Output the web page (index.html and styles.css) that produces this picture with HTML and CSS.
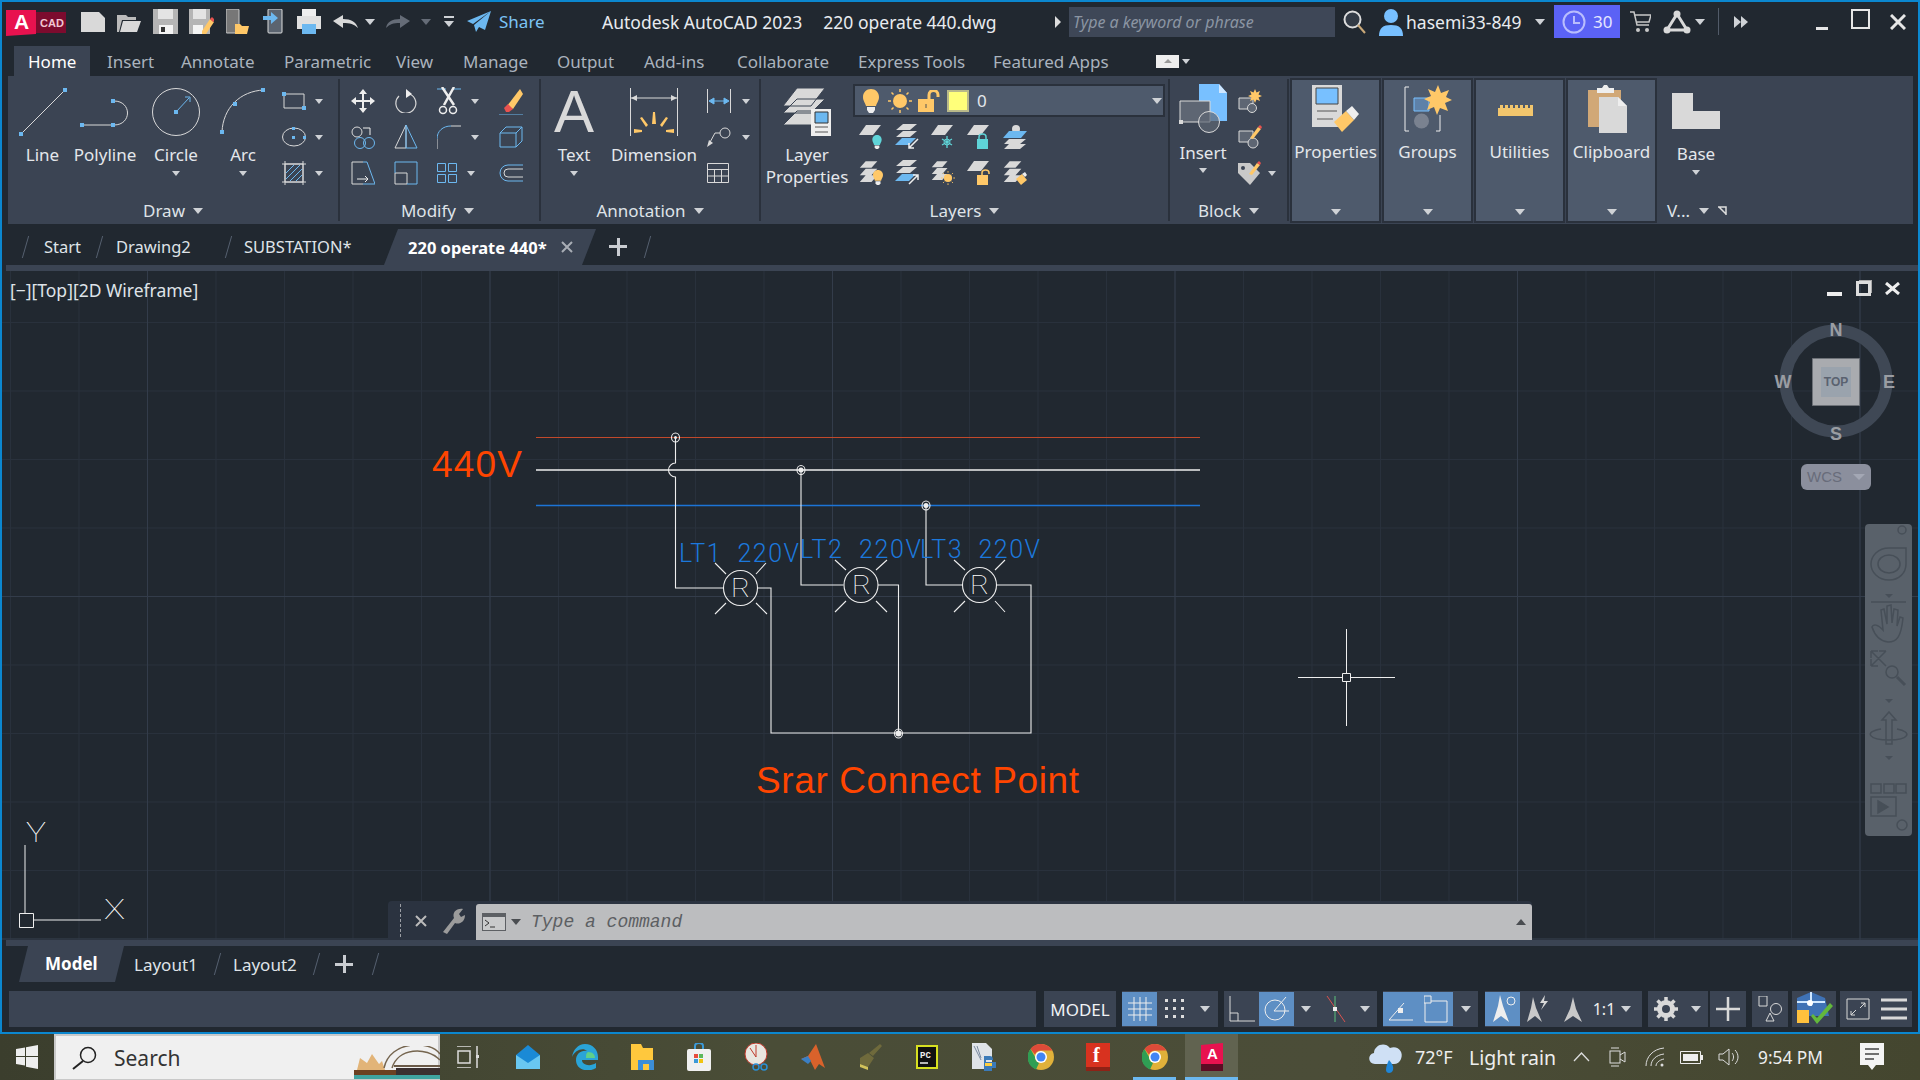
FILE: index.html
```html
<!DOCTYPE html>
<html>
<head>
    <title>Autodesk AutoCAD 2023</title>
    <meta charset="UTF-8">
    <link rel="stylesheet" href="styles.css">
</head>
<body>
<svg class="defs">
    <symbol id="layer" viewBox="0 0 22 11"><path d="M7 0h15l-8 10H0z" fill="#d9d9d9"/></symbol>
    <symbol id="stack" viewBox="0 0 24 26"><path d="M8 0h14l-7 8H1zM8 9h14l-7 8H1zM8 17h14l-7 8H1z" fill="#d9d9d9"/></symbol>
    <symbol id="bulb" viewBox="0 0 16 24"><path d="M8 0c4.500 0 8 3.500 8 8 0 4-2.500 6-3 9H3c-.5-3-3-5-3-9 0-4.500 3.500-8 8-8z" fill="currentColor"/><path d="M4 18h8v3l-2 3H6l-2-3z" fill="#eee"/></symbol>
    <symbol id="lock" viewBox="0 0 16 20"><path d="M1 8h14v12H1z" fill="currentColor"/><path d="M8 12v4" stroke="#3b4453"/></symbol>
    <symbol id="sun" viewBox="0 0 24 24"><circle cx="12" cy="12" r="7" fill="#ffc868"/><path d="M12 0v3M12 21v3M0 12h3M21 12h3M3.500 3.500l2 2M18.500 18.500l2 2M3.500 20.500l2-2M18.500 5.500l2-2" stroke="#ffc868" stroke-width="1.500"/></symbol>
    <symbol id="chrome" viewBox="0 0 26 26"><circle cx="13" cy="13" r="13" fill="#e0b13a"/><path d="M13 0a13 13 0 0 1 11.300 6.500H13a6.500 6.500 0 0 0-6 4L2.500 5A13 13 0 0 1 13 0z" fill="#dd4b39"/><path d="M2.500 5L7 13a6.500 6.500 0 0 0 4 6l-3 6.500A13 13 0 0 1 2.500 5z" fill="#2f9e54"/><circle cx="13" cy="13" r="6" fill="#fff"/><circle cx="13" cy="13" r="4.500" fill="#4285f4"/></symbol>
</svg>

<div class="window">
    <div class="titlebar">
        <svg class="logo" width="60" height="28" viewBox="0 0 60 28"><path d="M0 2h30v24L0 28z" fill="#e8124f"/><path d="M30 4h30v21H30z" fill="#7c0b2e"/><text x="8" y="21" class="logo-a">A</text><text x="34" y="19" class="logo-cad">CAD</text></svg>
        <span class="qat"><svg width="24" height="20" viewBox="0 0 24 20"><path d="M0 0h18l6 6v14H0z" fill="#d9d9d9"/></svg></span>
        <span class="qat"><svg width="24" height="20" viewBox="0 0 24 20"><path d="M0 3h9l2 2h8v3H5L2 20H0z" fill="#bbb"/><path d="M6 9h18l-4 11H3z" fill="#d9d9d9"/></svg></span>
        <span class="qat"><svg width="25" height="25" viewBox="0 0 25 25"><path d="M0 0h25v25H0z" fill="#b5b5b5"/><path d="M5 0h15v10H5z" fill="#e4e4e4"/><path d="M6 16h14v9H6z" fill="#f4f4f4"/><path d="M8 18h4v5H8z" fill="#333"/></svg></span>
        <span class="qat"><svg width="25" height="25" viewBox="0 0 25 25"><path d="M0 0h21v25H0z" fill="#b5b5b5"/><path d="M4 0h13v10H4z" fill="#e4e4e4"/><path d="M4 16h10v9H4z" fill="#f4f4f4"/><path d="M13 22l8-12 4 3-8 12h-4z" fill="#ffc868"/><path d="M21 10l2-2 3 3-2 2z" fill="#e9524f"/></svg></span>
        <span class="qat"><svg width="23" height="25" viewBox="0 0 23 25"><rect x="0" y="0" width="13" height="24" rx="1" fill="#777" stroke="#ccc"/><path d="M9 15h5l2 2h7l-2 8H9z" fill="#ffc868"/></svg></span>
        <span class="qat"><svg width="20" height="25" viewBox="0 0 20 25"><rect x="5" y="0" width="14" height="24" rx="1" fill="#5b6470" stroke="#ddd"/><path d="M0 7h8V3l7 6-7 6v-4H0z" fill="#6cb8f0"/></svg></span>
        <span class="qat"><svg width="24" height="25" viewBox="0 0 24 25"><path d="M5 0h14v8H5z" fill="#eee"/><path d="M0 7h24v13H0z" fill="#e0e0e0"/><path d="M5 15h14v10H5z" fill="#6cb8f0"/></svg></span>
        <span class="qat"><svg width="25" height="13" viewBox="0 0 25 13"><path d="M0 6L10 0v4c8 0 13 3 15 9-4-4-8-5-15-5v5z" fill="#d9d9d9"/></svg></span>
        <span class="qat-caret"><i class="caret"></i></span>
        <span class="qat-redo"><svg width="24" height="13" viewBox="0 0 24 13"><path d="M24 6L14 0v4C6 4 1 7 0 13c4-4 7-5 14-5v5z" fill="#656c77"/></svg></span>
        <span class="qat-caret"><i class="caret dim"></i></span>
        <span class="qat-more"><b></b><i class="caret"></i></span>
        <svg class="plane" width="24" height="21" viewBox="0 0 24 21"><path d="M24 0L0 10l6 3zM24 0L7 14l2 7 3-5 6 3z" fill="#6cb8f0"/></svg>
        <span class="share">Share</span>
        <span class="doc-title"><span>Autodesk AutoCAD 2023</span><span>220 operate 440.dwg</span></span>
        <span class="title-arrow"></span>
        <span class="search">Type a keyword or phrase</span>
        <span class="search-icon"><svg width="24" height="24" viewBox="0 0 24 24"><circle cx="9.500" cy="9.500" r="8" fill="#333b46" stroke="#ddd" stroke-width="2"/><path d="M15 15l7 8" stroke="#c9a878" stroke-width="2"/></svg></span>
        <svg class="user" width="24" height="28" viewBox="0 0 24 28"><circle cx="12" cy="8" r="7" fill="#78c0ff"/><path d="M0 28c0-8 4-11 12-11s12 3 12 11z" fill="#78c0ff"/></svg>
        <span class="user-name">hasemi33-849</span>
        <span class="user-caret"><i class="caret"></i></span>
        <span class="trial"><svg width="24" height="24" viewBox="0 0 24 24"><circle cx="12" cy="12" r="10.500" fill="none" stroke="#b9bdfd" stroke-width="2"/><path d="M12 6v7h6" fill="none" stroke="#b9bdfd" stroke-width="2"/></svg>30</span>
        <span class="cart"><svg width="21" height="22" viewBox="0 0 21 22"><path d="M0 1h4l3 13h12M5 4h16l-2 7H7" fill="none" stroke="#c8c8c8" stroke-width="1.500"/><circle cx="8" cy="19" r="2" fill="#c8c8c8"/><circle cx="17" cy="19" r="2" fill="#c8c8c8"/></svg></span>
        <span class="a360"><svg width="28" height="24" viewBox="0 0 28 24"><path d="M14 4L4 20h20z" fill="none" stroke="#d9d9d9" stroke-width="3" stroke-linejoin="round"/><circle cx="14" cy="4" r="3.500" fill="#d9d9d9"/><circle cx="4" cy="20" r="3.500" fill="#d9d9d9"/><circle cx="24" cy="20" r="3.500" fill="#d9d9d9"/></svg></span>
        <span class="a360-caret"><i class="caret"></i></span>
        <span class="divider"></span>
        <span class="more"><i></i><i></i></span>
        <span class="win-btn"><b class="win-min"></b></span>
        <span class="win-btn"><b class="win-max"></b></span>
        <span class="win-btn"><svg width="16" height="16" viewBox="0 0 16 16"><path d="M1 1l14 14M15 1L1 15" stroke="#e6e6e6" stroke-width="3"/></svg></span>
    </div>

    <div class="ribbon-tabs">
        <span class="rtab active">Home</span><span class="rtab">Insert</span><span class="rtab">Annotate</span><span class="rtab">Parametric</span><span class="rtab">View</span><span class="rtab">Manage</span><span class="rtab">Output</span><span class="rtab">Add-ins</span><span class="rtab">Collaborate</span><span class="rtab">Express Tools</span><span class="rtab">Featured Apps</span>
        <span class="ribbon-toggle"><b></b><i class="caret"></i></span>
    </div>

    <div class="ribbon">
        <!-- Draw -->
        <section class="panel panel-draw">
            <div class="panel-body">
                <div class="tool tool-line"><svg width="48" height="48" viewBox="0 0 48 48"><path d="M2 46L46 2" stroke="#d9d9d9"/><path d="M0 44h4v4H0zM44 0h4v4h-4z" fill="#6cb8f0"/></svg><span>Line</span></div>
                <div class="tool tool-poly"><svg width="50" height="48" viewBox="0 0 50 48"><path d="M2 37h32c18 0 18-24 0-24" fill="none" stroke="#d9d9d9"/><path d="M0 35h4v4H0zM31 35h4v4h-4zM31 11h4v4h-4z" fill="#6cb8f0"/></svg><span>Polyline</span></div>
                <div class="tool tool-circle"><svg width="48" height="48" viewBox="0 0 48 48"><circle cx="24" cy="24" r="23.500" fill="none" stroke="#d9d9d9"/><path d="M24 24L37 10M33 9h5v5" fill="none" stroke="#6cb8f0"/><path d="M22 22h4v4h-4z" fill="#6cb8f0"/></svg><span>Circle</span><i class="caret"></i></div>
                <div class="tool tool-arc"><svg width="46" height="48" viewBox="0 0 46 48"><path d="M2 44C3 20 20 3 44 2" fill="none" stroke="#d9d9d9"/><path d="M0 42h4v4H0zM13 14h4v4h-4zM41 0h4v4h-4z" fill="#6cb8f0"/></svg><span>Arc</span><i class="caret"></i></div>
                <div class="small-col draw-col">
                    <div class="small"><svg width="24" height="18" viewBox="0 0 24 18"><path d="M2 2h20v14H2z" fill="none" stroke="#d9d9d9"/><path d="M0 0h4v4H0zM20 14h4v4h-4z" fill="#6cb8f0"/></svg><i class="caret"></i></div>
                    <div class="small"><svg width="24" height="20" viewBox="0 0 24 20"><ellipse cx="12" cy="10" rx="11.500" ry="9" fill="none" stroke="#d9d9d9"/><path d="M10 0h3v3h-3zM10 9h3v3h-3zM21 9h3v3h-3z" fill="#6cb8f0"/></svg><i class="caret"></i></div>
                    <div class="small"><svg width="24" height="24" viewBox="0 0 24 24"><path d="M3 3h18v18H3zM0 3h24M0 21h24M3 0v24M21 0v24" fill="none" stroke="#d9d9d9"/><path d="M4 12l8-8M4 18L18 4M8 20L20 8M14 20l6-6" stroke="#6cb8f0"/></svg><i class="caret"></i></div>
                </div>
            </div>
            <div class="panel-title">Draw<i class="caret"></i></div>
        </section>

        <!-- Modify -->
        <section class="panel panel-modify">
            <div class="panel-body">
                <div class="modify-grid">
                    <span class="cell"><svg width="24" height="24" viewBox="0 0 24 24"><path d="M12 0l4 5h-3v6h6V8l5 4-5 4v-3h-6v6h3l-4 5-4-5h3v-6H5v3l-5-4 5-4v3h6V5H8z" fill="#eee"/></svg></span>
                    <span class="cell"><svg width="22" height="24" viewBox="0 0 22 24"><path d="M13 4.500A10 10 0 1 1 4 7" fill="none" stroke="#d9d9d9" stroke-width="1.200"/><path d="M11 0l6 5-6 4z" fill="#eee"/></svg></span>
                    <span class="cell wide"><svg width="24" height="28" viewBox="0 0 24 28"><path d="M0 2h9M15 2h9" stroke="#6cb8f0"/><path d="M5 0l12 18M17 0L7 18" stroke="#eee" stroke-width="2.500"/><circle cx="6" cy="23" r="3.500" fill="none" stroke="#eee" stroke-width="1.500"/><circle cx="16" cy="23" r="3.500" fill="none" stroke="#eee" stroke-width="1.500"/></svg><i class="caret"></i></span>
                    <span class="cell"><svg width="24" height="28" viewBox="0 0 24 28"><path d="M0 28h24" stroke="#6cb8f0"/><path d="M8 19L21 2l3 5-10 15z" fill="#ffc868"/><path d="M5 21l4-4 5 5-4 3H7z" fill="#e9524f"/></svg></span>
                    <span class="cell"><svg width="24" height="24" viewBox="0 0 24 24"><circle cx="6" cy="7" r="5" fill="none" stroke="#d9d9d9"/><circle cx="9" cy="18" r="5.500" fill="none" stroke="#6cb8f0"/><circle cx="18" cy="18" r="5.500" fill="none" stroke="#6cb8f0"/><path d="M12 3h7v7" fill="none" stroke="#eee"/></svg></span>
                    <span class="cell"><svg width="24" height="24" viewBox="0 0 24 24"><path d="M12 0L1 23h11z" fill="none" stroke="#d9d9d9"/><path d="M12 0l11 23H12z" fill="none" stroke="#6cb8f0"/></svg></span>
                    <span class="cell wide"><svg width="24" height="24" viewBox="0 0 24 24"><path d="M0 24V14" fill="none" stroke="#d9d9d9"/><path d="M14 1h10" stroke="#d9d9d9"/><path d="M0 14C0 6 6 1 14 1" fill="none" stroke="#6cb8f0"/></svg><i class="caret"></i></span>
                    <span class="cell"><svg width="24" height="22" viewBox="0 0 24 22"><path d="M1 7h16v14H1zM1 7l6-6h16l-6 6M17 21l6-6V1" fill="none" stroke="#6cb8f0"/></svg></span>
                    <span class="cell"><svg width="24" height="24" viewBox="0 0 24 24"><path d="M12 1H1v22h11" fill="none" stroke="#d9d9d9"/><path d="M12 1h4l8 22H12" fill="none" stroke="#6cb8f0"/><path d="M6 18h11M14 15l3 3-3 3" fill="none" stroke="#eee"/></svg></span>
                    <span class="cell"><svg width="24" height="24" viewBox="0 0 24 24"><path d="M1 12h12v11H1z" fill="none" stroke="#d9d9d9"/><path d="M1 12V1h22v22H13" fill="none" stroke="#6cb8f0"/></svg></span>
                    <span class="cell wide"><svg width="20" height="20" viewBox="0 0 20 20"><path d="M.5.5h8v8h-8zM11.500.5h8v8h-8zM.5 11.500h8v8h-8zM11.500 11.500h8v8h-8z" fill="none" stroke="#6cb8f0"/></svg><i class="caret"></i></span>
                    <span class="cell"><svg width="24" height="18" viewBox="0 0 24 18"><path d="M24 1H9a8 8 0 0 0 0 16h15" fill="none" stroke="#6cb8f0"/><path d="M24 5H9a4 4 0 0 0 0 8h15" fill="none" stroke="#d9d9d9"/></svg></span>
                </div>
            </div>
            <div class="panel-title title-modify">Modify<i class="caret"></i></div>
        </section>

        <!-- Annotation -->
        <section class="panel panel-annot">
            <div class="panel-body">
                <div class="tool tool-text"><span class="big-a">A</span><span>Text</span><i class="caret"></i></div>
                <div class="tool tool-dim"><svg width="48" height="48" viewBox="0 0 48 48"><path d="M.5 0v48M47.500 0v48M1 10h46" fill="none" stroke="#d9d9d9"/><path d="M1 10l6-3v6zM47 10l-6-3v6z" fill="#d9d9d9"/><path d="M23 24h2l1 12h-4zM10 30l2-1 6 8-2 2zM38 30l-2-1-6 8 2 2zM4 41l8 1v2l-8 1zM44 41l-8 1v2l8 1z" fill="#ffc868"/></svg><span>Dimension</span></div>
                <div class="small-col annot-col">
                    <div class="small"><svg width="24" height="24" viewBox="0 0 24 24"><path d="M.5 0v24M23.500 0v24" stroke="#d9d9d9" fill="none"/><path d="M2 12l5-3v6zM22 12l-5-3v6zM7 12h10" fill="#6cb8f0" stroke="#6cb8f0"/></svg><i class="caret"></i></div>
                    <div class="small"><svg width="24" height="20" viewBox="0 0 24 20"><circle cx="18" cy="6" r="5" fill="none" stroke="#d9d9d9"/><path d="M13 6H8L2 17" fill="none" stroke="#d9d9d9"/><path d="M0 20l2-7 4 3z" fill="#d9d9d9"/></svg><i class="caret"></i></div>
                    <div class="small"><svg width="22" height="20" viewBox="0 0 22 20"><path d="M.5.5h21v19H.5zM.5 6.500h21M.5 13h21M7.500 6.500V19.500M14.500 6.500V19.500" fill="none" stroke="#d9d9d9"/></svg><i class="caret hide"></i></div>
                </div>
            </div>
            <div class="panel-title">Annotation<i class="caret"></i></div>
        </section>

        <!-- Layers -->
        <section class="panel panel-layers">
            <div class="panel-body">
                <div class="tool tool-layerprops"><svg width="48" height="48" viewBox="0 0 48 48"><path d="M14 0h28L28 18H0zM14 11h28L28 25H0zM14 23h28L28 37H0z" fill="#d9d9d9" stroke="#3b4453"/><path d="M28 21h20v27H28z" fill="#eee"/><path d="M32 24h13v11H32z" fill="#6cb8f0" stroke="#333"/><path d="M32 39h13M32 44h13" stroke="#555"/></svg><span>Layer<br>Properties</span></div>
                <div class="layers-right">
                    <div class="layer-combo">
                        <svg class="combo-bulb" width="16" height="24"><use href="#bulb"/></svg>
                        <svg class="combo-sun" width="24" height="24"><use href="#sun"/></svg>
                        <svg class="combo-lock" width="22" height="22" viewBox="0 0 22 22"><path d="M0 9h16v13H0z" fill="#ffc868"/><path d="M8 14v4" stroke="#555"/><path d="M11 9V5c0-6 9-6 9 0v2" fill="none" stroke="#ffc868" stroke-width="3"/></svg>
                        <span class="combo-swatch"></span>
                        <span class="combo-name">0</span>
                        <i class="caret combo-caret"></i>
                    </div>
                    <div class="layer-row">
                        <span><svg width="24" height="24" viewBox="0 0 24 24"><use href="#layer" width="22" height="11"/><use href="#bulb" x="13" y="10" width="10" height="14" color="#5fd4d8"/></svg></span>
                        <span><svg width="24" height="26" viewBox="0 0 24 26"><path d="M8 0h14l-7 6H1zM8 7h14l-7 6H1z" fill="#d9d9d9"/><path d="M7 14h14l-7 7H0z" fill="#6cb8f0"/><path d="M23 15l-9 9M14 19v5h5" fill="none" stroke="#eee" stroke-width="1.500"/></svg></span>
                        <span><svg width="24" height="24" viewBox="0 0 24 24"><use href="#layer" width="22" height="11"/><path d="M16 11v12M11 14l10 6M21 14l-10 6" stroke="#5fd4d8" stroke-width="1.300"/><circle cx="16" cy="17" r="3" fill="none" stroke="#5fd4d8"/></svg></span>
                        <span><svg width="24" height="24" viewBox="0 0 24 24"><use href="#layer" width="22" height="11"/><path d="M10 14h11v10H10z" fill="#5fd4d8"/><path d="M12 14v-2c0-4 7-4 7 0v2" fill="none" stroke="#5fd4d8" stroke-width="1.500"/></svg></span>
                        <span><svg width="24" height="24" viewBox="0 0 24 24"><circle cx="13" cy="4" r="4" fill="#d9d9d9"/><path d="M6 6h18l-6 7H0z" fill="#6cb8f0"/><path d="M6 14h17l-6 5H1zM6 19h17l-6 5H1z" fill="#d9d9d9"/></svg></span>
                    </div>
                    <div class="layer-row">
                        <span><svg width="24" height="24" viewBox="0 0 24 24"><use href="#stack" width="20" height="22"/><use href="#bulb" x="14" y="9" width="10" height="15" color="#ffc868"/></svg></span>
                        <span><svg width="24" height="26" viewBox="0 0 24 26"><path d="M8 0h14l-7 6H1zM8 7h14l-7 6H1z" fill="#d9d9d9"/><path d="M7 14h14l-7 7H0z" fill="#6cb8f0"/><path d="M14 24l9-9M18 15h5v5" fill="none" stroke="#eee" stroke-width="1.500"/></svg></span>
                        <span><svg width="24" height="24" viewBox="0 0 24 24"><use href="#stack" width="18" height="20"/><use href="#sun" x="10" y="10" width="14" height="14"/></svg></span>
                        <span><svg width="24" height="24" viewBox="0 0 24 24"><use href="#layer" width="22" height="11"/><path d="M10 14h11v10H10z" fill="#ffc868"/><path d="M15 14v-2c0-4 7-4 7 0v1" fill="none" stroke="#ffc868" stroke-width="1.500"/></svg></span>
                        <span><svg width="24" height="24" viewBox="0 0 24 24"><use href="#stack" width="20" height="22"/><path d="M13 18l6-5 5 6-6 5z" fill="#ffc868"/><path d="M19 13l3-2 2 3-2 2z" fill="#eee"/></svg></span>
                    </div>
                </div>
            </div>
            <div class="panel-title">Layers<i class="caret"></i></div>
        </section>

        <!-- Block -->
        <section class="panel panel-block">
            <div class="panel-body">
                <div class="tool tool-insert"><svg width="48" height="49" viewBox="0 0 48 49"><path d="M20 0h20l8 9v28H20z" fill="#78c0ff"/><path d="M40 0l8 9h-8z" fill="#cfe7ff"/><path d="M1 17h30v21H1z" fill="#5e6673" stroke="#d9d9d9"/><circle cx="30" cy="38" r="10.500" fill="#5e6673" fill-opacity=".7" stroke="#d9d9d9"/><path d="M0 36h4v4H0z" fill="#d9d9d9"/></svg><span>Insert</span><i class="caret"></i></div>
                <div class="small-col block-col">
                    <div class="small"><svg width="24" height="24" viewBox="0 0 24 24"><path d="M1 9h14v11H1z" fill="#5e6673" stroke="#d9d9d9"/><circle cx="14" cy="19" r="4.500" fill="#5e6673" stroke="#d9d9d9"/><path d="M17 0l1.500 3.500L22 2l-1.500 3.500L24 7l-3.500 1.500L22 12l-3.500-1.500L17 14l-1.500-3.500L12 12l1.500-3.500L10 7l3.500-1.500L12 2l3.500 1.500z" fill="#ffc868"/></svg><i class="caret hide"></i></div>
                    <div class="small"><svg width="24" height="24" viewBox="0 0 24 24"><path d="M1 6h14v11H1z" fill="#5e6673" stroke="#d9d9d9"/><circle cx="15" cy="18" r="5" fill="#5e6673" stroke="#d9d9d9"/><path d="M12 13L20 2l3 2-8 10z" fill="#ffc868"/><path d="M20 2l2-2 2 2-1 2z" fill="#e9524f"/></svg><i class="caret hide"></i></div>
                    <div class="small"><svg width="24" height="24" viewBox="0 0 24 24"><path d="M0 2h12l10 10-10 12L0 12z" fill="#c9c9c9"/><circle cx="5" cy="7" r="2" fill="#3b4453"/><path d="M11 13L19 2l3 2-8 10z" fill="#ffc868"/><path d="M19 2l2-2 2 2-1 2z" fill="#e9524f"/></svg><i class="caret"></i></div>
                </div>
            </div>
            <div class="panel-title">Block<i class="caret"></i></div>
        </section>

        <!-- collapsed panels -->
        <section class="collapsed-group">
            <div class="collapsed">
                <svg width="48" height="48" viewBox="0 0 48 48"><path d="M0 0h30v42H0z" fill="#d9d9d9"/><path d="M4 3h22v16H4z" fill="#78c0ff" stroke="#444"/><path d="M5 26h20M5 34h16" stroke="#555"/><path d="M22 37l12-11 8 9-12 12z" fill="#ffc868"/><path d="M34 26l6-5 7 8-5 6z" fill="#eee"/></svg>
                <span>Properties</span><i class="caret"></i>
            </div>
            <div class="collapsed">
                <svg width="48" height="48" viewBox="0 0 48 48"><path d="M5 2H1v44h4M32 46h4V30" fill="none" stroke="#eee"/><path d="M10 13h15v13H10z" fill="#5e81a8" stroke="#78c0ff"/><ellipse cx="17.500" cy="36" rx="7.500" ry="7.500" fill="#7a8290"/><path d="M34 0l3 8 8-3-3 7 6 3-7 3 3 8-8-3-3 7-3-8-7 3 3-8-6-3 7-3-3-7 7 3z" fill="#ffc868"/></svg>
                <span>Groups</span><i class="caret"></i>
            </div>
            <div class="collapsed">
                <svg width="48" height="48" viewBox="0 0 48 48"><path d="M2 20v3h2v-3h3v3h2v-3h3v3h2v-3h3v3h2v-3h3v3h2v-3h3v3h2v-3h3v3h2v-3h3v11H2z" fill="#f2c66d"/></svg>
                <span>Utilities</span><i class="caret"></i>
            </div>
            <div class="collapsed">
                <svg width="48" height="48" viewBox="0 0 48 48"><path d="M0 5h33v37H0z" fill="#d1a877"/><path d="M9 3h5l2-3h3l2 3h5v5H9z" fill="#eee"/><path d="M11 12h19l9 9v27H11z" fill="#d9d9d9"/><path d="M30 12l9 9h-9z" fill="#eee"/></svg>
                <span>Clipboard</span><i class="caret"></i>
            </div>
        </section>

        <!-- View -->
        <section class="panel panel-view">
            <div class="panel-body">
                <div class="tool tool-base"><svg width="48" height="36" viewBox="0 0 48 36"><path d="M0 0h21v18h27v18H0z" fill="#d9d9d9"/></svg><span>Base</span><i class="caret"></i></div>
            </div>
            <div class="panel-title view-title">V...<i class="caret"></i><svg width="9" height="9" viewBox="0 0 9 9"><path d="M0 1h8v8M8 8L1 1" fill="none" stroke="#ddd" stroke-width="1.500"/></svg></div>
        </section>
    </div>

    <div class="doc-tabs">
        <i class="slash s1"></i><span class="doc-tab t1">Start</span>
        <i class="slash"></i><span class="doc-tab t2">Drawing2</span>
        <i class="slash"></i><span class="doc-tab t3">SUBSTATION*</span>
        <span class="doc-active">220 operate 440*<svg width="12" height="12" viewBox="0 0 12 12"><path d="M1 1l10 10M11 1L1 11" stroke="#a8adb5" stroke-width="2"/></svg></span>
        <span class="plus"></span>
        <i class="slash s-end"></i>
    </div>
    <div class="strip"></div>

    <div class="viewport">
        <span class="vp-label">[−][Top][2D Wireframe]</span>
        <svg class="drawing" width="1916" height="669" viewBox="2 271 1916 669">
            <path d="M536 437.500H1200" stroke="#c2492b" stroke-width="1"/>
            <path d="M536 470H1200" stroke="#eee" stroke-width="1.300"/>
            <path d="M536 505.500H1200" stroke="#1c74d6" stroke-width="1.300"/>
            <g fill="none" stroke="#eee" stroke-width="1.100">
                <path d="M675.500 437V463A7 7 0 0 0 675.500 477V588H723.500M757 588H771V733H1031V585H997M801 470V585H843.500M878 585H898.500V733M926 505.500V585H962"/>
                <ellipse cx="740.500" cy="588" rx="17" ry="17.500"/>
                <ellipse cx="861" cy="585" rx="17" ry="17.500"/>
                <ellipse cx="979.500" cy="585" rx="17" ry="17.500"/>
                <path d="M715 563L726 574M766 563L756 574M726 603L715 614M756 603L767 614"/>
                <path d="M835 560L846 570M887 560L876 570M846 601L835 612M876 601L887 612"/>
                <path d="M954 560L965 570M1005 560L995 570M965 601L954 612M995 601L1005 612"/>
                <ellipse cx="675.500" cy="437.500" rx="4" ry="4.500"/>
                <ellipse cx="801" cy="470" rx="4" ry="4.500"/>
                <ellipse cx="926" cy="505.500" rx="4" ry="4.500"/>
                <ellipse cx="898.500" cy="733.500" rx="4" ry="4.500"/>
            </g>
            <g fill="#eee">
                <circle cx="675.500" cy="437.500" r="1.500"/>
                <circle cx="801" cy="470" r="2.500"/>
                <circle cx="926" cy="505.500" r="2.500"/>
                <circle cx="898.500" cy="733.500" r="3"/>
            </g>
            <text class="cad-thin" x="731" y="597" textLength="19" lengthAdjust="spacingAndGlyphs">R</text>
            <text class="cad-thin" x="852" y="594" textLength="19" lengthAdjust="spacingAndGlyphs">R</text>
            <text class="cad-thin" x="970" y="594" textLength="19" lengthAdjust="spacingAndGlyphs">R</text>
            <text class="cad-blue" x="679" y="562" textLength="120" xml:space="preserve">LT1  220V</text>
            <text class="cad-blue" x="800" y="558" textLength="121" xml:space="preserve">LT2  220V</text>
            <text class="cad-blue" x="920" y="558" textLength="120" xml:space="preserve">LT3  220V</text>
            <text class="cad-red" x="432" y="477" textLength="90">440V</text>
            <text class="cad-red" x="756" y="793" textLength="323">Srar Connect Point</text>
            <!-- crosshair -->
            <path d="M1298 677.500H1342M1351 677.500H1395M1346.500 629V673M1346.500 682V726" stroke="#eee"/>
            <path d="M1342.500 673.500h8v8h-8z" fill="none" stroke="#eee"/>
            <!-- ucs -->
            <path d="M25 845V913M33 920H101M19.500 913.500h14v14h-14z" fill="none" stroke="#eee"/>
            <text class="cad-ucs" x="26" y="842" textLength="20" lengthAdjust="spacingAndGlyphs">Y</text>
            <text class="cad-ucs" x="104" y="919" textLength="21" lengthAdjust="spacingAndGlyphs">X</text>
        </svg>

        <div class="vp-controls">
            <b class="vp-min"></b>
            <b class="vp-restore"></b>
            <svg width="15" height="13" viewBox="0 0 15 13"><path d="M1 1l13 11M14 1L1 12" stroke="#eee" stroke-width="3"/></svg>
        </div>

        <svg class="viewcube" width="130" height="130" viewBox="0 0 130 130">
            <circle cx="65" cy="65" r="50.500" fill="none" stroke="#3f4855" stroke-width="12"/>
            <path d="M41.500 42.500h47v47h-47z" fill="#a9abaf" stroke="#6e7278"/>
            <path d="M50 51h30v30H50z" fill="#9aa3ad"/>
            <text class="cube-top" x="65" y="70">TOP</text>
            <text class="cube-dir" x="65" y="20">N</text>
            <text class="cube-dir" x="65" y="124">S</text>
            <text class="cube-dir" x="12" y="72">W</text>
            <text class="cube-dir" x="118" y="72">E</text>
        </svg>
        <div class="wcs">WCS<i></i></div>

        <svg class="navbar" width="47" height="312" viewBox="0 0 47 312">
            <rect width="47" height="312" rx="4" fill="#59616a"/>
            <g fill="none" stroke="#474f58" stroke-width="1.500">
                <circle cx="37" cy="6" r="4"/>
                <path d="M24 24c-11 0-18 8-18 16s7 16 18 16c10 0 17-7 17-16V24z"/>
                <ellipse cx="24" cy="40" rx="11" ry="9"/>
                <path d="M6 78h35"/>
                <path d="M18 106c-5-6-10-6-11-3 2 6 6 14 16 15 9 0 13-5 15-24l-3-1-3 9 1-16-4-1-2 14-1-18-4 1v18l-3-15-3 1z"/>
                <path d="M6 127l15 15M21 127L6 142M6 127v7M6 127h7M21 127h-7M6 142v-7M6 142h7"/>
                <circle cx="27" cy="148" r="6"/>
                <path d="M32 153l8 8" stroke-width="3"/>
                <path d="M24 188l7 8h-4v24h-6v-24h-4zM16 205c-18 3-12 11 8 11 20 0 24-8 8-11"/>
                <path d="M6 260h10v9H6zM19 260h10v9H19zM31 260h10v9H31zM6 273h25v19H6z"/>
                <path d="M13 277l10 6-10 6z" fill="#474f58"/>
                <circle cx="37" cy="301" r="5"/>
            </g>
            <path d="M20 70h8l-4 4zM20 175h8l-4 4zM20 232h8l-4 4z" fill="#474f58"/>
        </svg>

        <div class="command">
            <span class="cmd-grip"></span>
            <svg width="12" height="12" viewBox="0 0 12 12"><path d="M1 1l10 10M11 1L1 11" stroke="#bbb" stroke-width="2"/></svg>
            <svg width="24" height="26" viewBox="0 0 24 26"><path d="M2 24L13 10c-2-5 2-10 9-9l-4 5 2 3 4-2c0 7-6 10-10 8L6 26z" fill="#9b9b9b"/></svg>
            <div class="cmd-input">
                <svg width="24" height="18" viewBox="0 0 24 18"><path d="M0 0h24v18H0z" fill="#5d6064"/><path d="M1 4h22v13H1z" fill="#c9cacb"/><path d="M3 7l4 3-4 3M8 14h5" fill="none" stroke="#333"/></svg>
                <i class="cmd-caret"></i>
                <span>Type a command</span>
                <i class="cmd-up"></i>
            </div>
        </div>
    </div>

    <div class="strip"></div>
    <div class="layout-tabs">
        <span class="model-tab">Model</span>
        <span class="layout-tab l1">Layout1</span>
        <i class="slash"></i>
        <span class="layout-tab l2">Layout2</span>
        <i class="slash"></i>
        <span class="plus lplus"></span>
        <i class="slash"></i>
    </div>

    <div class="statusbar">
        <div class="status-fill"></div>
        <div class="sgroup sg-model">MODEL</div>
        <div class="sgroup sg-grid">
            <span class="sbtn on"><svg width="24" height="24" viewBox="0 0 24 24"><path d="M6 0v24M12 0v24M18 0v24M0 6h24M0 12h24M0 18h24" stroke="#eee"/></svg></span>
            <span class="sbtn"><svg width="20" height="20" viewBox="0 0 20 20"><path d="M0 0h3v3H0zM8 0h3v3H8zM16 0h3v3h-3zM0 8h3v3H0zM8 8h3v3H8zM16 8h3v3h-3zM0 16h3v3H0zM8 16h3v3H8zM16 16h3v3h-3z" fill="#ddd"/></svg></span>
            <span class="scaret"><i class="caret"></i></span>
        </div>
        <div class="sgroup sg-ortho">
            <span class="sbtn"><svg width="26" height="26" viewBox="0 0 26 26"><path d="M1 0v25h25M1 17h8v8" fill="none" stroke="#d9d9d9"/></svg></span>
            <span class="sbtn on"><svg width="26" height="26" viewBox="0 0 26 26"><circle cx="11" cy="14" r="10" fill="none" stroke="#eee"/><path d="M10 15L22 1M10 15h15" stroke="#eee"/></svg></span>
            <span class="scaret"><i class="caret"></i></span>
            <span class="sbtn"><svg width="20" height="26" viewBox="0 0 20 26"><path d="M1 0l18 26" stroke="#d9534f"/><path d="M9 0v26" stroke="#5cc17c"/><path d="M7 11h4v4H7z" fill="#eee"/></svg></span>
            <span class="scaret"><i class="caret"></i></span>
        </div>
        <div class="sgroup sg-iso">
            <span class="sbtn on"><svg width="24" height="24" viewBox="0 0 24 24"><path d="M0 23L15 6M0 23h24" stroke="#eee" fill="none"/><path d="M9 11h5v5H9z" fill="#eee"/></svg></span>
            <span class="sbtn on"><svg width="24" height="28" viewBox="0 0 24 28"><path d="M5 6h18v21H1V6" fill="none" stroke="#eee"/><path d="M0 1h7v7H0z" fill="#5e8fc4" stroke="#eee"/></svg></span>
            <span class="scaret"><i class="caret"></i></span>
        </div>
        <div class="sgroup sg-anno">
            <span class="sbtn on"><svg width="26" height="28" viewBox="0 0 26 28"><path d="M10 0l3 11 6 16-8-6-8 6 5-16z" fill="#eee"/><circle cx="21" cy="6" r="4" fill="none" stroke="#eee"/></svg></span>
            <span class="sbtn"><svg width="26" height="28" viewBox="0 0 26 28"><path d="M8 2l3 11 6 14-7-6-8 6 4-14z" fill="#c9c9c9"/><path d="M20 0l-5 8h4l-3 7 7-9h-4z" fill="#d9d9d9"/></svg></span>
            <span class="sbtn"><svg width="22" height="28" viewBox="0 0 22 28"><path d="M11 2l3 12 6 13-9-6-9 6 6-13z" fill="#c9c9c9"/></svg></span>
            <span class="sscale">1:1</span>
            <span class="scaret"><i class="caret"></i></span>
        </div>
        <div class="sgroup sg-gear">
            <span class="sbtn"><svg width="24" height="24" viewBox="0 0 24 24"><circle cx="12" cy="12" r="6.500" fill="none" stroke="#d9d9d9" stroke-width="5"/><path d="M12 0v24M0 12h24M3.500 3.500l17 17M3.500 20.500l17-17" stroke="#d9d9d9" stroke-width="3.500" stroke-dasharray="5 14"/></svg></span>
            <span class="scaret"><i class="caret"></i></span>
        </div>
        <div class="sgroup sg-plus"><svg width="24" height="24" viewBox="0 0 24 24"><path d="M12 0v24M0 12h24" stroke="#d9d9d9" stroke-width="2.500"/></svg></div>
        <div class="sgroup sg-shapes"><svg width="24" height="26" viewBox="0 0 24 26"><path d="M1 0h8v10H1zM8 25l4-8 4 8z" fill="none" stroke="#d9d9d9"/><circle cx="18" cy="13" r="5.500" fill="none" stroke="#d9d9d9"/></svg></div>
        <div class="sgroup sg-clean"><svg width="42" height="34" viewBox="0 0 42 34"><path d="M4 6l14-6 14 6 4 18H4z" fill="#3f72b5"/><path d="M18 0v14M4 10h28" stroke="#cfe7ff" stroke-width="2"/><circle cx="17" cy="11" r="3" fill="#fff"/><path d="M4 18h12v13H4z" fill="#ffc13d"/><path d="M18 24l6 8L40 14l-3-3-13 15-4-4z" fill="#63b83c"/></svg></div>
        <div class="sgroup sg-full">
            <svg width="24" height="22" viewBox="0 0 24 22"><path d="M1 1h22v20H1z" fill="none" stroke="#d9d9d9"/><path d="M5 17l5-5M5 17v-4M5 17h4M19 5l-5 5M19 5v4M19 5h-4" fill="none" stroke="#d9d9d9"/></svg>
            <svg width="26" height="22" viewBox="0 0 26 22"><path d="M0 2h26M0 11h26M0 20h26" stroke="#d9d9d9" stroke-width="3"/></svg>
        </div>
    </div>
</div>

<div class="taskbar">
    <svg class="tb-start" width="22" height="24" viewBox="0 0 22 24"><path d="M0 4l9-1.500V11H0zM10 2.300L22 0v11H10zM0 12h9v8.500L0 19zM10 12h12v12l-12-2.200z" fill="#eee"/></svg>
    <div class="tb-search">
        <svg width="26" height="24" viewBox="0 0 26 24"><circle cx="16" cy="9" r="7.500" fill="none" stroke="#222" stroke-width="1.500"/><path d="M11 15L1 23" stroke="#222" stroke-width="2"/></svg>
        <span>Search</span>
        <svg class="tb-opera" width="86" height="33" viewBox="0 0 86 33">
            <path d="M0 29h86v4H0z" fill="#3fa3a0"/>
            <path d="M0 24h48v5H0z" fill="#6b4122"/>
            <path d="M3 24l3-12 7 5 5-9 7 10 3-3 3 9z" fill="#e2b478"/>
            <path d="M30 22C36-6 76-6 86 8M38 22C44 2 72 0 86 14" fill="none" stroke="#75654f" stroke-width="1.500"/>
            <path d="M40 19h46v2H40z" fill="#6a5a48"/>
            <path d="M42 22h44v7H42z" fill="#3a3030"/>
        </svg>
    </div>
    <span class="tb-app tb-view"><svg width="22" height="22" viewBox="0 0 22 22"><path d="M0 0h14M0 22h14M20 0v22" stroke="#ddd" stroke-width="1.500"/><path d="M1 5h12v12H1z" fill="none" stroke="#ddd" stroke-width="1.500"/><path d="M19 9h3v3h-3z" fill="#ddd"/></svg></span>
    <span class="tb-app"><svg width="24" height="24" viewBox="0 0 24 24"><path d="M12 0L0 10v14h24V10z" fill="#1a8ad6"/><path d="M0 10l12 8 12-8v14H0z" fill="#69c7f1"/></svg></span>
    <span class="tb-app"><svg width="26" height="26" viewBox="0 0 26 26"><path d="M13 0c8 0 13 6 13 13v3H10c0 5 8 7 14 3v5c-8 5-20 2-20-8C4 10 9 6 15 7c-4-4-12-1-15 6C1 6 6 0 13 0z" fill="#2aa4d8"/><path d="M16 8c5 0 7 3 7 6h-9c0-3 0-5 2-6z" fill="#5fd08a"/></svg></span>
    <span class="tb-app"><svg width="24" height="26" viewBox="0 0 24 26"><path d="M1 0h10l2 4h10v22H1z" fill="#ffc83d"/><path d="M8 16h16v10H8z" fill="#3c8ed8"/><path d="M13 20h6v6h-6z" fill="#ffc83d"/></svg></span>
    <span class="tb-app"><svg width="24" height="28" viewBox="0 0 24 28"><path d="M8 6V3c0-4 8-4 8 0v3" fill="none" stroke="#3c9ad8" stroke-width="2"/><rect y="6" width="24" height="22" rx="2" fill="#f0f0f0"/><path d="M7 11h4v4H7z" fill="#e74c3c"/><path d="M12 11h4v4h-4z" fill="#5cb85c"/><path d="M7 16h4v4H7z" fill="#3c9ad8"/><path d="M12 16h4v4h-4z" fill="#f1c40f"/></svg></span>
    <span class="tb-app"><svg width="24" height="28" viewBox="0 0 24 28"><ellipse cx="12" cy="11" rx="11" ry="11" fill="#e9e6e0" stroke="#c0392b"/><path d="M12 2v12M6 5l6 9" stroke="#c0392b"/><circle cx="12" cy="24" r="3" fill="none" stroke="#2c8fd4" stroke-width="1.500"/><circle cx="20" cy="24" r="3" fill="none" stroke="#2c8fd4" stroke-width="1.500"/></svg></span>
    <span class="tb-app"><svg width="24" height="26" viewBox="0 0 24 26"><path d="M0 15l7-3L15 0l3 8 6 16-6-4-4 6-5-10z" fill="#d9622b"/><path d="M0 15l7-3 3 5-3 3z" fill="#3b7fc4"/></svg></span>
    <span class="tb-app"><svg width="24" height="26" viewBox="0 0 24 26"><path d="M22 0l2 2-9 10-4-3zM2 14l8-5 6 5-6 9-8-3z" fill="#6f6a3c"/><path d="M2 20l8 3v3l-8-3z" fill="#d2c25a"/></svg></span>
    <span class="tb-app"><svg width="22" height="24" viewBox="0 0 22 24"><path d="M0 0h22v24H0z" fill="#d7e021"/><path d="M2 2h18v20H2z" fill="#111"/><text x="4" y="13" class="pc-text">PC</text><path d="M4 18h8" stroke="#eee" stroke-width="1.500"/></svg></span>
    <span class="tb-app"><svg width="24" height="28" viewBox="0 0 24 28"><path d="M0 0h14l6 6v20H0z" fill="#dfe3e8"/><path d="M2 3l7 14M5 3l4 12" stroke="#7a8aa0"/><path d="M12 13h6c3 0 3 3 3 4h-7v2h10v6h-4v3h-8z" fill="#3b7ab8"/><path d="M13 20h7v3h-7z" fill="#ffcf40"/></svg></span>
    <span class="tb-app"><svg width="26" height="26"><use href="#chrome"/></svg></span>
    <span class="tb-app"><svg width="24" height="28" viewBox="0 0 24 28"><path d="M0 0h24v24H0z" fill="#d8321f"/><path d="M0 24h24v4H0z" fill="#8e2216"/><text x="7" y="19" class="flash-text">f</text></svg></span>
    <span class="tb-app tb-run"><svg width="26" height="26"><use href="#chrome"/></svg></span>
    <span class="tb-app tb-acad"><svg width="22" height="28" viewBox="0 0 22 28"><path d="M0 2l22-2v21H0z" fill="#e8124f"/><path d="M0 21h22v7H0z" fill="#5d0b24"/><text x="6" y="16" class="acad-text">A</text></svg></span>
    <div class="tb-tray">
        <svg class="tb-cloud" width="38" height="34" viewBox="0 0 38 34"><path d="M8 24C1 24 0 14 7 13c0-8 11-12 16-5 8-3 14 4 11 11-1 3-4 5-7 5z" fill="#cfe0f5"/><path d="M22 20c3 3 5 7 4 10-1 4-7 4-7 0 0-3 1-6 3-10z" fill="#1f86d8"/></svg>
        <span class="tray-temp">72°F</span>
        <span class="tray-weather">Light rain</span>
        <svg class="tray-chev" width="17" height="10" viewBox="0 0 17 10"><path d="M1 9l7.500-8L16 9" fill="none" stroke="#ddd" stroke-width="1.300"/></svg>
        <svg class="tray-meet" width="18" height="22" viewBox="0 0 18 22"><rect x="2" y="5" width="10" height="12" fill="none" stroke="#ddd"/><path d="M12 9l5-3v10l-5-3M3 2h8M3 20h8" fill="none" stroke="#ddd"/></svg>
        <svg class="tray-wifi" width="20" height="20" viewBox="0 0 20 20"><path d="M1 19C1 10 8 2 19 1M6 19c0-6 5-11 13-12M11 19c0-3 3-6 8-7" fill="none" stroke="#ddd"/><circle cx="17" cy="18" r="1.500" fill="#ddd"/></svg>
        <svg class="tray-batt" width="24" height="13" viewBox="0 0 24 13"><path d="M.5.5h20v12H.5z" fill="none" stroke="#eee"/><path d="M3 3h15v7H3z" fill="#eee"/><path d="M21 4h2v5h-2z" fill="#eee"/></svg>
        <svg class="tray-vol" width="22" height="20" viewBox="0 0 22 20"><path d="M1 7h4l6-5v16l-6-5H1z" fill="none" stroke="#ddd"/><path d="M14 6c2 2 2 6 0 8M17 3c4 4 4 10 0 14" fill="none" stroke="#ddd"/></svg>
        <span class="tray-time">9:54 PM</span>
        <svg class="tray-note" width="24" height="28" viewBox="0 0 24 28"><path d="M0 0h24v22h-8l-4 5-4-5H0z" fill="#f4f4f4"/><path d="M5 6h14M5 11h14M5 16h9" stroke="#444" stroke-width="1.500"/></svg>
    </div>
</div>
</body>
</html>
```

FILE: styles.css
```css
* {
    box-sizing: border-box;
}
html, body {
    margin: 0;
    padding: 0;
}
body {
    width: 1920px;
    height: 1080px;
    overflow: hidden;
    background-color: #212830;
    font-family: "Noto Sans", Arial, sans-serif;
    font-size: 17px;
    color: #dfe3e8;
    display: flex;
    flex-direction: column;
}
.defs {
    position: absolute;
    width: 0;
    height: 0;
}
svg {
    display: block;
    flex: none;
}
.caret {
    display: inline-block;
    width: 0;
    height: 0;
    border-left: 5px solid transparent;
    border-right: 5px solid transparent;
    border-top: 6px solid #cfd2d6;
}
.caret.dim {
    border-top-color: #656c77;
}
.caret.hide {
    visibility: hidden;
}

/* window frame */
.window {
    height: 1034px;
    border: 2px solid #0b87cf;
    background-color: #212830;
    display: flex;
    flex-direction: column;
}

/* title bar */
.titlebar {
    height: 44px;
    display: flex;
    align-items: center;
    padding: 0 0 5px 4px;
    flex: none;
}
.logo {
    margin-right: 9px;
}
.logo-a {
    font: bold 21px "Liberation Sans", sans-serif;
    fill: #fff;
}
.logo-cad {
    font: bold 11px "Liberation Sans", sans-serif;
    fill: #f1c6d3;
}
.qat {
    width: 36px;
    display: flex;
    justify-content: center;
}
.qat-caret {
    width: 14px;
    display: flex;
    justify-content: center;
}
.qat-redo {
    width: 42px;
    display: flex;
    justify-content: center;
}
.qat-more {
    width: 32px;
    display: flex;
    flex-direction: column;
    align-items: center;
    gap: 3px;
}
.qat-more b {
    width: 10px;
    height: 2px;
    background-color: #cfd2d6;
}
.plane {
    margin-left: 2px;
    margin-right: 8px;
}
.share {
    width: 103px;
    color: #7cc3f5;
}
.doc-title {
    width: 444px;
    display: flex;
    gap: 21px;
    font-size: 17.500px;
    color: #e8ebef;
}
.title-arrow {
    width: 23px;
    display: flex;
    justify-content: center;
}
.title-arrow::before {
    content: "";
    border-left: 6px solid #ddd;
    border-top: 6px solid transparent;
    border-bottom: 6px solid transparent;
}
.search {
    width: 266px;
    height: 30px;
    line-height: 30px;
    padding-left: 4px;
    font-size: 16px;
    font-style: italic;
    background-color: #3e4757;
    color: #8b95a3;
}
.search-icon {
    width: 40px;
    display: flex;
    justify-content: center;
}
.user {
    margin: 0 3px 0 4px;
}
.user-name {
    width: 123px;
    font-size: 17.500px;
    color: #e8ebef;
    white-space: nowrap;
}
.user-caret {
    width: 22px;
    display: flex;
    justify-content: center;
}
.trial {
    width: 66px;
    height: 33px;
    margin-left: 3px;
    background-color: #5b62f5;
    display: flex;
    align-items: center;
    gap: 7px;
    padding-left: 8px;
    color: #e4e6ff;
}
.cart {
    width: 40px;
    display: flex;
    justify-content: center;
}
.a360 {
    width: 33px;
    display: flex;
    justify-content: center;
}
.a360-caret {
    width: 14px;
    display: flex;
    justify-content: center;
}
.divider {
    width: 1px;
    height: 27px;
    margin-left: 11px;
    background-color: #525b69;
}
.more {
    display: flex;
    margin-left: 15px;
    width: 69px;
}
.more i {
    border-left: 7px solid #cfd2d6;
    border-top: 6px solid transparent;
    border-bottom: 6px solid transparent;
}
.win-btn {
    width: 38px;
    height: 30px;
    display: flex;
    align-items: center;
    justify-content: center;
}
.win-min {
    width: 12px;
    height: 3px;
    margin-top: 14px;
    background-color: #e6e6e6;
}
.win-max {
    width: 19px;
    height: 20px;
    border: 2px solid #e6e6e6;
    margin-top: -6px;
}

/* ribbon tabs */
.ribbon-tabs {
    height: 30px;
    display: grid;
    grid-template-columns: 76px 76px 103px 112px 67px 94px 87px 93px 121px 135px 162px 16px 40px;
    padding-left: 12px;
    flex: none;
    align-items: center;
}
.rtab {
    height: 30px;
    line-height: 32px;
    padding-left: 15px;
    color: #aab3be;
    white-space: nowrap;
}
.rtab.active {
    background-color: #3b4453;
    color: #fff;
    padding-left: 14px;
}
.rtab:nth-child(2) {
    padding-left: 17px;
}
.ribbon-toggle {
    grid-column: 13;
    display: flex;
    align-items: center;
    gap: 3px;
}
.ribbon-toggle b {
    width: 23px;
    height: 13px;
    background-color: #eee;
    display: flex;
    align-items: center;
    justify-content: center;
}
.ribbon-toggle b::before {
    content: "";
    border-left: 4px solid transparent;
    border-right: 4px solid transparent;
    border-bottom: 4px solid #999;
}
.ribbon-toggle .caret {
    border-left-width: 4px;
    border-right-width: 4px;
    border-top-width: 5px;
}

/* ribbon */
.ribbon {
    height: 148px;
    margin: 0 5px 0 6px;
    background-color: #3b4453;
    display: flex;
    flex: none;
}
.panel {
    display: flex;
    flex-direction: column;
    border-right: 2px solid #2a313c;
    margin: 3px 0;
}
.panel-draw { width: 332px; }
.panel-modify { width: 201px; }
.panel-annot { width: 220px; }
.panel-layers { width: 409px; }
.panel-block { width: 119px; }
.panel-view {
    flex: 1;
    border-right: none;
}
.panel-body {
    height: 120px;
    display: flex;
    flex: none;
}
.panel-title {
    height: 25px;
    display: flex;
    align-items: center;
    justify-content: center;
    gap: 8px;
    color: #dfe3e8;
    font-size: 17px;
}
.title-modify {
    padding-right: 4px;
}
.tool {
    display: flex;
    flex-direction: column;
    align-items: center;
    padding-top: 9px;
    font-size: 17px;
    line-height: 22px;
    text-align: center;
    color: #e4e7eb;
    flex: none;
}
.tool span {
    margin-top: 8px;
}
.tool .caret {
    margin-top: 5px;
    border-left-width: 4px;
    border-right-width: 4px;
    border-top-width: 5px;
}
.tool-line { width: 69px; }
.tool-poly { width: 56px; }
.tool-circle { width: 86px; }
.tool-arc { width: 48px; }
.draw-col { margin-left: 15px; }
.small-col {
    padding-top: 4px;
    display: flex;
    flex-direction: column;
}
.small {
    height: 36px;
    display: flex;
    align-items: center;
    gap: 9px;
}
.small .caret {
    border-left-width: 4px;
    border-right-width: 4px;
    border-top-width: 5px;
}
.modify-grid {
    display: grid;
    grid-template-columns: 43px 43px 62px 43px;
    grid-auto-rows: 36px;
    padding-top: 4px;
    margin-left: 1px;
}
.cell {
    display: flex;
    align-items: center;
    justify-content: center;
}
.cell.wide {
    justify-content: flex-start;
    padding-left: 10px;
    gap: 10px;
}
.cell.wide .caret {
    border-left-width: 4px;
    border-right-width: 4px;
    border-top-width: 5px;
}
.tool-text { width: 66px; }
.big-a {
    font: 60px/48px "Liberation Sans", sans-serif;
    color: #d9d9d9;
    height: 48px;
}
.tool .big-a {
    margin-top: 0;
}
.tool-dim {
    width: 92px;
    margin-left: 1px;
}
.annot-col {
    margin-left: 7px;
}
.annot-col .small {
    gap: 11px;
}
.tool-layerprops {
    width: 92px;
}
.layers-right {
    padding-top: 5px;
    width: 312px;
}
.layer-combo {
    height: 33px;
    background-color: #4e5a6c;
    border: 2px solid #2a313c;
    display: flex;
    align-items: center;
    padding-left: 8px;
}
.combo-sun { margin-left: 9px; }
.combo-lock { margin-left: 6px; }
.combo-swatch {
    width: 22px;
    height: 22px;
    margin-left: 7px;
    background-color: #ffff7a;
    border: 2px solid #b9b98a;
}
.combo-name {
    margin-left: 8px;
    color: #e4e7eb;
}
.combo-caret {
    margin-left: auto;
    margin-right: 1px;
}
.combo-bulb { color: #ffc868; }
.layer-row {
    display: flex;
    height: 36px;
    align-items: center;
}
.layer-row span {
    width: 36px;
    display: flex;
    justify-content: center;
}
.layer-row:nth-child(2) {
    margin-top: 2px;
}
.tool-insert {
    width: 66px;
    padding-top: 5px;
}
.tool-insert span {
    margin-top: 9px;
}
.tool-insert .caret {
    margin-top: 4px;
}
.block-col {
    margin-left: 2px;
}
.block-col .small {
    gap: 6px;
}
.collapsed-group {
    display: flex;
    padding: 0 1px;
    gap: 1px;
}
.collapsed {
    width: 91px;
    height: 145px;
    margin-top: 2px;
    background-color: #4e5a6c;
    border: 2px solid #2a313c;
    display: flex;
    flex-direction: column;
    align-items: center;
    padding-top: 5px;
    line-height: 22px;
    color: #e4e7eb;
}
.collapsed span {
    margin-top: 8px;
}
.collapsed .caret {
    margin-top: auto;
    margin-bottom: 6px;
}
.tool-base {
    width: 76px;
    padding-top: 14px;
}
.tool-base span {
    margin-top: 14px;
}
.view-title {
    justify-content: flex-start;
    padding-left: 9px;
    gap: 9px;
}

/* doc tabs */
.doc-tabs {
    height: 41px;
    display: flex;
    align-items: center;
    padding: 4px 0 0 23px;
    flex: none;
}
.slash {
    width: 1px;
    height: 22px;
    background-color: #566070;
    transform: skewX(-16deg);
    flex: none;
}
.doc-tab {
    color: #dfe3e8;
    white-space: nowrap;
    font-size: 16.500px;
}
.t1 { width: 55px; margin-left: 18px; }
.t2 { width: 112px; margin-left: 16px; }
.t3 { width: 140px; margin-left: 15px; }
.doc-active {
    width: 212px;
    height: 36px;
    margin-top: 1px;
    background-color: #3b4453;
    clip-path: polygon(14px 0, 100% 0, calc(100% - 14px) 100%, 0 100%);
    display: flex;
    align-items: center;
    gap: 14px;
    padding-left: 24px;
    font-weight: bold;
    font-size: 16.500px;
    color: #fff;
    white-space: nowrap;
    flex: none;
}
.plus {
    width: 18px;
    height: 18px;
    margin-left: 13px;
    flex: none;
    background:
        linear-gradient(#c9ccd1, #c9ccd1) center/100% 3px no-repeat,
        linear-gradient(#c9ccd1, #c9ccd1) center/3px 100% no-repeat;
}
.s-end { margin-left: 20px; }
.strip {
    height: 6px;
    margin-left: 4px;
    background-color: #3b4453;
    flex: none;
}

/* drawing area */
.viewport {
    flex: 1;
    position: relative;
    overflow: hidden;
    background-color: #212830;
    background-image:
        linear-gradient(#333c4a 1px, transparent 1px),
        linear-gradient(90deg, #333c4a 1px, transparent 1px),
        linear-gradient(#29313c 1px, transparent 1px),
        linear-gradient(90deg, #29313c 1px, transparent 1px);
    background-size: 342.500px 342.500px, 342.500px 342.500px, 68.500px 68.500px, 68.500px 68.500px;
    background-position: 0 325px, 145px 0, 0 51px, 8px 0;
}
.vp-label {
    position: absolute;
    left: 8px;
    top: 7px;
    font-size: 17.500px;
    color: #dfe3e8;
}
.drawing {
    position: absolute;
    left: 0;
    top: 0;
}
.cad-thin {
    font: 100 25px Roboto, sans-serif;
    fill: #fff;
}
.cad-blue {
    font: 300 25px Roboto, sans-serif;
    fill: #1c78dc;
    white-space: pre;
}
.cad-red {
    font: 37px "Liberation Sans", sans-serif;
    fill: #ff4500;
}
.cad-ucs {
    font: 100 27px Roboto, sans-serif;
    fill: #fff;
}
.vp-controls {
    position: absolute;
    right: 18px;
    top: 10px;
    display: flex;
    align-items: center;
    gap: 14px;
}
.vp-min {
    width: 15px;
    height: 4px;
    margin-top: 10px;
    background-color: #eee;
}
.vp-restore {
    width: 15px;
    height: 15px;
    border: 3px solid #ddd;
    box-shadow: 2px -2px 0 -1px #aaa;
}
.viewcube {
    position: absolute;
    left: 1769px;
    top: 45px;
}
.cube-top {
    font: bold 12px "Liberation Sans", sans-serif;
    fill: #5a6270;
    text-anchor: middle;
}
.cube-dir {
    font: bold 18px "Liberation Sans", sans-serif;
    fill: #9a9da3;
    text-anchor: middle;
}
.wcs {
    position: absolute;
    left: 1799px;
    top: 193px;
    width: 70px;
    height: 26px;
    background-color: #8b8f9d;
    border-radius: 6px;
    font: 15px/26px "Liberation Sans", sans-serif;
    color: #686c7a;
    padding-left: 6px;
}
.wcs i {
    position: absolute;
    right: 6px;
    top: 10px;
    border-left: 6px solid transparent;
    border-right: 6px solid transparent;
    border-top: 6px solid #a3a7b4;
}
.navbar {
    position: absolute;
    left: 1863px;
    top: 253px;
}
.command {
    position: absolute;
    left: 386px;
    top: 630px;
    height: 39px;
    width: 1144px;
    background-color: #2b3340;
    border-radius: 4px 4px 0 0;
    display: flex;
    align-items: center;
    padding-left: 12px;
}
.cmd-grip {
    width: 0;
    height: 33px;
    border-left: 1px dashed #9a9da3;
    margin-right: 14px;
}
.command > svg + svg {
    margin-left: 14px;
}
.cmd-input {
    width: 1056px;
    height: 36px;
    margin-left: 11px;
    margin-top: 2px;
    background-color: #bcbdbf;
    border-radius: 3px 3px 0 0;
    display: flex;
    align-items: center;
    padding-left: 6px;
    font: italic 18px "Liberation Mono", monospace;
    color: #5c5f63;
}
.cmd-caret {
    margin-left: 5px;
    border-left: 5px solid transparent;
    border-right: 5px solid transparent;
    border-top: 6px solid #4a4d51;
}
.cmd-input span {
    margin-left: 10px;
}
.cmd-up {
    margin-left: auto;
    margin-right: 6px;
    border-left: 5px solid transparent;
    border-right: 5px solid transparent;
    border-bottom: 6px solid #4a4d51;
}

/* layout tabs */
.layout-tabs {
    height: 36px;
    display: flex;
    align-items: center;
    padding-left: 17px;
    flex: none;
}
.model-tab {
    width: 105px;
    height: 36px;
    background-color: #3b4453;
    clip-path: polygon(9px 0, 100% 0, calc(100% - 9px) 100%, 0 100%);
    line-height: 36px;
    padding-left: 26px;
    font-weight: bold;
    font-size: 17px;
    color: #fff;
}
.layout-tab {
    color: #dfe3e8;
    font-size: 17px;
    white-space: nowrap;
}
.l1 { width: 83px; margin-left: 10px; }
.l2 { width: 83px; margin-left: 15px; }
.lplus { margin-left: 18px; }
.layout-tabs .slash:last-child { margin-left: 22px; }

/* status bar */
.statusbar {
    height: 37px;
    margin: 9px 0 4px;
    display: flex;
    padding-left: 7px;
    flex: none;
}
.status-fill {
    width: 1027px;
    height: 36px;
    background-color: #3b4453;
}
.sgroup {
    height: 36px;
    background-color: #3b4453;
    display: flex;
    align-items: center;
    flex: none;
}
.sg-model {
    width: 72px;
    margin-left: 8px;
    justify-content: center;
    font-size: 17px;
    color: #f0f2f5;
}
.sg-grid { width: 96px; margin-left: 6px; }
.sg-ortho { width: 153px; margin-left: 6px; }
.sg-iso { width: 95px; margin-left: 6px; }
.sg-anno { width: 157px; margin-left: 7px; }
.sg-gear { width: 60px; margin-left: 6px; }
.sg-plus { width: 36px; margin-left: 2px; justify-content: center; }
.sg-shapes { width: 36px; margin-left: 6px; justify-content: center; }
.sg-clean { width: 44px; margin-left: 4px; justify-content: center; }
.sg-full { width: 72px; margin-left: 4px; justify-content: space-around; }
.sbtn {
    width: 35px;
    height: 34px;
    display: flex;
    align-items: center;
    justify-content: center;
    flex: none;
}
.sbtn.on {
    background-color: #5e8fc4;
}
.scaret {
    width: 26px;
    display: flex;
    justify-content: center;
}
.sscale {
    width: 28px;
    font-size: 16px;
    text-align: center;
    color: #eee;
}
.sg-anno .scaret {
    width: 16px;
}

/* windows taskbar */
.taskbar {
    height: 46px;
    flex: none;
    display: flex;
    align-items: center;
    background: linear-gradient(90deg, #3b3e2d 0%, #4a4d37 40%, #4b4d38 70%, #44462f 100%);
    position: relative;
}
.tb-start {
    margin-left: 16px;
    margin-right: 16px;
}
.tb-search {
    width: 386px;
    height: 46px;
    background-color: #f0f0f0;
    border: 2px solid #c9c9c9;
    border-bottom-width: 1px;
    display: flex;
    align-items: center;
    padding-left: 16px;
    font-size: 21px;
    color: #333;
    position: relative;
}
.tb-search span {
    margin-left: 16px;
}
.tb-opera {
    position: absolute;
    right: -2px;
    bottom: 0;
}
.tb-app {
    width: 57px;
    height: 46px;
    display: flex;
    align-items: center;
    justify-content: center;
    flex: none;
}
.tb-view {
    width: 59px;
    padding-right: 4px;
}
.tb-run {
    width: 43px;
    margin: 0 9px 0 7px;
    padding-top: 3px;
    border-bottom: 3px solid #6cb8f0;
}
.tb-acad {
    width: 53px;
    padding-top: 3px;
    background-color: #616350;
    border-bottom: 3px solid #6cb8f0;
}
.pc-text {
    font: bold 9px "Liberation Mono", monospace;
    fill: #eee;
}
.flash-text {
    font: bold 20px "Liberation Serif", serif;
    fill: #fff;
}
.acad-text {
    font: bold 15px "Liberation Sans", sans-serif;
    fill: #fff;
}
.tb-tray {
    display: flex;
    align-items: center;
    position: absolute;
    left: 1367px;
    top: 0;
    height: 46px;
    font-size: 18px;
    color: #eee;
}
.tray-temp { margin-left: 10px; width: 54px; }
.tray-weather { width: 94px; font-size: 19.500px; white-space: nowrap; }
.tray-chev { margin-left: 10px; }
.tray-meet { margin-left: 18px; }
.tray-wifi { margin-left: 19px; }
.tray-batt { margin-left: 15px; }
.tray-vol { margin-left: 14px; }
.tray-time { margin-left: 18px; width: 82px; font-size: 17.300px; white-space: nowrap; }
.tray-note { margin-left: 20px; }
```
